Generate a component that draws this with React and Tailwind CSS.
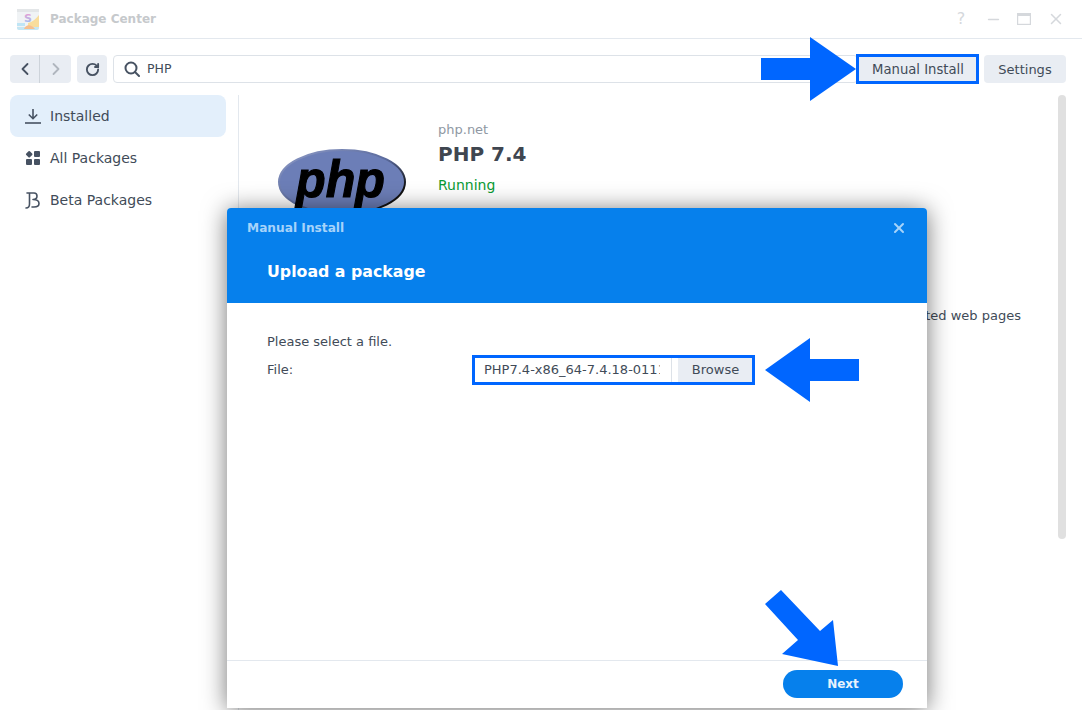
import React from 'react';
import { ChevronLeft, ChevronRight, RotateCw, X, Minus } from 'lucide-react';

const ArrowRight = () => (
  <svg className="absolute left-[761px] top-[37px]" width="96" height="65" viewBox="0 0 96 65">
    <polygon points="0,21 49,21 49,0 95,32 49,64 49,43 0,43" fill="#0066ff" />
  </svg>
);

const ArrowLeft = () => (
  <svg className="absolute left-[765px] top-[337px]" width="95" height="65" viewBox="0 0 95 65">
    <polygon points="94,22 45,22 45,1 0,33 45,65 45,44 94,44" fill="#0066ff" />
  </svg>
);

const ArrowDown = () => (
  <svg className="absolute left-[764px] top-[589px]" width="76" height="78" viewBox="0 0 76 78">
    <polygon points="1,15 17,1 56,42 69,31 74,77 18,65 34,51" fill="#0066ff" />
  </svg>
);

const AppIcon = () => (
  <svg width="22" height="23" viewBox="0 0 22 23">
    <defs>
      <linearGradient id="sGrad" x1="0" y1="0" x2="0" y2="1">
        <stop offset="0" stopColor="#f29ad0" />
        <stop offset="1" stopColor="#8ec5f5" />
      </linearGradient>
    </defs>
    <rect x="0" y="1" width="22" height="21" rx="2" fill="#f0f3f5" />
    <rect x="0" y="1" width="22" height="3" fill="#e3e6e8" />
    <path d="M11 15 C15 14 19 11 22 7 V20 H11 Z" fill="#f8dd9c" />
    <path d="M0 15 H8 V18 H0 Z" fill="#bfe5f5" />
    <path d="M0 19 H22 V20 C22 21 21 22 20 22 H2 C1 22 0 21 0 20 Z" fill="#c5e6f3" />
    <path d="M7 21 C9 16 14 16 18 21 Z" fill="#f6bf8e" />
    <text x="7" y="14" fontSize="11" fontWeight="700" fill="url(#sGrad)" fontFamily="DejaVu Sans">S</text>
  </svg>
);

const InstalledIcon = () => (
  <svg width="16" height="16" viewBox="0 0 16 16" fill="none" stroke="#475262" strokeWidth="1.6">
    <path d="M8 1 V10.5 M3.8 6.5 L8 10.7 L12.2 6.5" />
    <path d="M0 15 H16" />
  </svg>
);

const GridIcon = () => (
  <svg width="16" height="16" viewBox="0 0 16 16" fill="#475262">
    <rect x="1.6" y="1.6" width="5.2" height="5.2" rx="1" transform="rotate(45 4.2 4.2)" />
    <rect x="9" y="1" width="6" height="6" rx="1" />
    <rect x="1" y="9" width="6" height="6" rx="1" />
    <rect x="9" y="9" width="6" height="6" rx="1" />
  </svg>
);

const BetaIcon = () => (
  <svg width="16" height="18" viewBox="0 0 16 18" fill="none" stroke="#475262" strokeWidth="1.6" strokeLinecap="round" strokeLinejoin="round">
    <path d="M1 17 C3 17 4.5 15.5 4.5 13 V2 M2 2 H9 C11 2 12 3.5 12 5 C12 7 10.5 8.5 8 8.5 C11.5 8.5 14 10 14 12.5 C14 14.5 12 16 9 16 H7" />
  </svg>
);

const SearchIcon = () => (
  <svg width="16" height="16" viewBox="0 0 16 16" fill="none" stroke="#475262" strokeWidth="2">
    <circle cx="7" cy="7" r="5.5" />
    <path d="M11 11 L15 15" strokeLinecap="round" />
  </svg>
);

const PhpLogo = () => (
  <svg width="130" height="72" viewBox="0 0 130 72">
    <defs>
      <linearGradient id="rim" x1="0" y1="0" x2="1" y2="1">
        <stop offset="0" stopColor="#8f9cc8" />
        <stop offset="0.5" stopColor="#5a6a9c" />
        <stop offset="0.8" stopColor="#111111" />
      </linearGradient>
    </defs>
    <ellipse cx="65" cy="33" rx="63" ry="32" fill="#6c7eb7" stroke="url(#rim)" strokeWidth="2" />
    <text x="19" y="48" fontSize="52" fontWeight="700" fontStyle="italic" fill="#000" stroke="#000" strokeWidth="1.2" fontFamily="Liberation Sans" textLength="89" lengthAdjust="spacingAndGlyphs">php</text>
  </svg>
);

const NavItem = ({ icon, label, active }) => (
  <div className={`flex items-center h-[42px] rounded-lg pl-[15px] gap-[9px] text-[14px] text-[#414b58] ${active ? 'bg-[#e3effb]' : ''}`}>
    <span className="w-[16px] flex justify-center">{icon}</span>
    <span>{label}</span>
  </div>
);

const App = () => {
  return (
    <div className="relative w-[1082px] h-[710px] overflow-hidden bg-white font-['DejaVu_Sans','Liberation_Sans',sans-serif] text-[13px] text-[#414b58]">
      {/* Title bar */}
      <div className="flex items-center h-[39px] border-b border-[#e3e8ee] pl-[17px] pr-[17px]">
        <AppIcon />
        <span className="ml-[11px] text-[12px] font-bold text-[#c6c9cc]">Package Center</span>
        <div className="ml-auto flex items-center gap-[15px] text-[#d5d8dc]">
          <span className="w-[16px] text-center text-[16px] mr-[1px]">?</span>
          <Minus size={17} strokeWidth={2} />
          <svg className="mr-[1px]" width="14" height="12" viewBox="0 0 14 12" fill="none" stroke="currentColor"><rect x="0.5" y="0.5" width="13" height="11" strokeWidth="1.4" /><rect x="0" y="0" width="14" height="3" fill="currentColor" stroke="none" /></svg>
          <X size={18} strokeWidth={2} />
        </div>
      </div>

      {/* Toolbar */}
      <div className="flex items-center h-[28px] mt-[16px] pl-[10px] pr-[16px]">
        <div className="flex h-[28px] w-[61px] rounded bg-[#e9edf3]">
          <div className="w-[30px] flex items-center justify-center border-r border-[#cdd3da]"><ChevronLeft size={20} strokeWidth={2.2} color="#475262" /></div>
          <div className="flex-1 flex items-center justify-center"><ChevronRight size={20} strokeWidth={2.2} color="#b0b6be" /></div>
        </div>
        <div className="ml-[6px] w-[30px] h-[28px] rounded bg-[#e9edf3] flex items-center justify-center"><RotateCw size={15} strokeWidth={3} color="#475262" /></div>
        <div className="ml-[6px] w-[745px] h-[28px] rounded border border-[#dde2e8] flex items-center pl-[10px] gap-[7px]">
          <SearchIcon />
          <span className="text-[12.5px] pt-[1px]">PHP</span>
        </div>
        <div className="ml-[-2px] w-[123px] h-[30px] border-[3px] border-[#0066ff] bg-[#e9edf3] flex items-center justify-center pt-[1px] pl-[1px] text-[13.2px]">Manual Install</div>
        <div className="ml-[5px] w-[82px] h-[28px] rounded bg-[#e9edf3] flex items-center justify-center pt-[1px]">Settings</div>
      </div>

      {/* Body */}
      <div className="flex mt-[12px] pl-[10px] pr-[16px]">
        <div className="w-[216px] flex flex-col">
          <NavItem active icon={<InstalledIcon />} label="Installed" />
          <NavItem icon={<GridIcon />} label="All Packages" />
          <NavItem icon={<BetaIcon />} label="Beta Packages" />
        </div>
        <div className="ml-[12px] w-px h-[615px] bg-[#e3e8ee]" />
        <div className="flex-1 pl-[38px] pt-[27px] relative">
          <div className="flex">
            <div className="mt-[27px]"><PhpLogo /></div>
            <div className="ml-[31px]">
              <div className="text-[13px] text-[#8f98a3] leading-[16px]">php.net</div>
              <div className="mt-[3px] text-[20px] font-bold text-[#3f4650] leading-[26px]">PHP 7.4</div>
              <div className="mt-[9px] text-[14px] text-[#0a9a34] leading-[18px]">Running</div>
            </div>
          </div>
          <div className="mt-[85px] text-right pr-[45px]">ted web pages</div>
        </div>
        <div className="w-[8px] h-[444px] rounded bg-[#e0e0e0] ml-[-8px]" />
      </div>

      {/* Modal */}
      <div className="absolute left-[227px] top-[208px] w-[700px] h-[500px] bg-white rounded-t flex flex-col shadow-[0_2px_24px_rgba(0,0,0,0.55)]">
        <div className="h-[95px] bg-[#0680ec] rounded-t pl-[20px] pr-[20px]">
          <div className="flex items-center justify-between h-[39px] pt-[1px]">
            <span className="text-[12.2px] font-bold text-[#a6d3fa]">Manual Install</span>
            <X size={16} strokeWidth={3} color="#a6d3fa" />
          </div>
          <div className="pl-[20px] mt-[14px] text-[15.8px] font-bold text-white leading-[22px]">Upload a package</div>
        </div>
        <div className="flex-1 pl-[40px] pt-[30px]">
          <div className="leading-[17px] text-[13px]">Please select a file.</div>
          <div className="flex items-center mt-[5px]">
            <span className="w-[205px] text-[13px]">File:</span>
            <div className="flex w-[283px] h-[30px] border-[3px] border-[#0066ff]">
              <div className="w-[197px] pl-[9px] pr-[11px] flex items-center border-r border-[#dde2e8]">
                <span className="overflow-hidden whitespace-nowrap">PHP7.4-x86_64-7.4.18-0111</span>
              </div>
              <div className="ml-[6px] flex-1 bg-[#e9edf3] flex items-center justify-center pl-[1px]">Browse</div>
            </div>
          </div>
        </div>
        <div className="h-[48px] border-t border-[#e3e8ee] flex items-center justify-end pr-[24px] pb-[1px]">
          <div className="w-[120px] h-[28px] rounded-full bg-[#0680ec] text-[#e6f2fd] font-bold text-[12px] flex items-center justify-center">Next</div>
        </div>
      </div>

      <ArrowRight />
      <ArrowLeft />
      <ArrowDown />
    </div>
  );
};

export default App;
